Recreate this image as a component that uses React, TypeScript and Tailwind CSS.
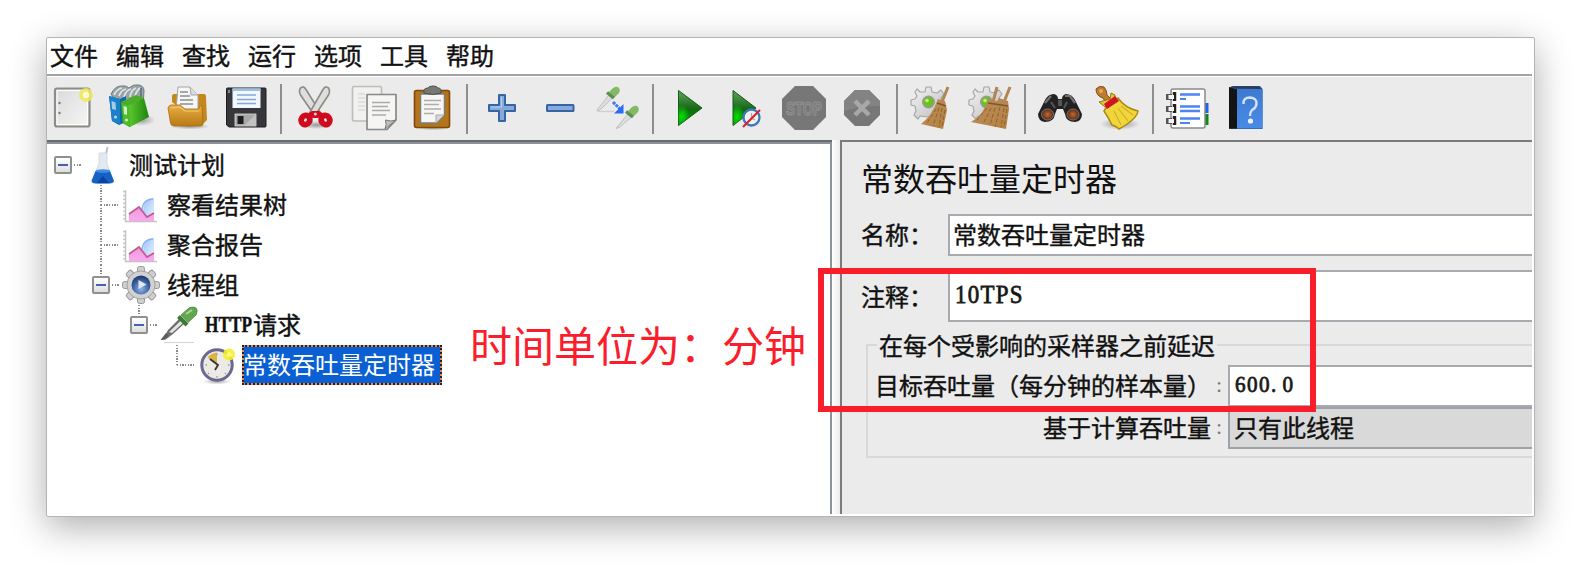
import type { ReactNode } from 'react';

const MENUS = ['文件', '编辑', '查找', '运行', '选项', '工具', '帮助'];

function Svg({ children, size = 48 }: { children: ReactNode; size?: number }) {
  return (
    <svg width={size} height={size} viewBox={`0 0 ${size} ${size}`} className="block shrink-0 overflow-visible">
      {children}
    </svg>
  );
}

function Gradients() {
  return (
    <svg width="0" height="0" className="absolute">
      <defs>
        <linearGradient id="paper" x1="0" y1="0" x2="1" y2="1">
          <stop offset="0" stopColor="#dadada" />
          <stop offset="1" stopColor="#f6f6f6" />
        </linearGradient>
        <linearGradient id="folder" x1="0" y1="0" x2="0" y2="1">
          <stop offset="0" stopColor="#e9ae44" />
          <stop offset="1" stopColor="#b87a14" />
        </linearGradient>
        <linearGradient id="play" x1="0" y1="0" x2="0" y2="1">
          <stop offset="0" stopColor="#5fa75f" />
          <stop offset=".48" stopColor="#1d6b1d" />
          <stop offset=".55" stopColor="#0c6d0c" />
          <stop offset="1" stopColor="#0a9a0a" />
        </linearGradient>
        <radialGradient id="glow" cx=".15" cy=".75" r=".35">
          <stop offset="0" stopColor="#06e006" />
          <stop offset="1" stopColor="#06e006" stopOpacity="0" />
        </radialGradient>
        <linearGradient id="straw" x1="0" y1="0" x2="1" y2="1">
          <stop offset="0" stopColor="#b98e5c" />
          <stop offset="1" stopColor="#b5813f" />
        </linearGradient>
        <linearGradient id="blue" x1="0" y1="0" x2="0" y2="1">
          <stop offset="0" stopColor="#3d7ad0" />
          <stop offset="1" stopColor="#4a8be8" />
        </linearGradient>
        <linearGradient id="green" x1="0" y1="0" x2="1" y2="0">
          <stop offset="0" stopColor="#5cc82c" />
          <stop offset="1" stopColor="#1d8410" />
        </linearGradient>
        <radialGradient id="lens">
          <stop offset="0" stopColor="#c06a38" />
          <stop offset="1" stopColor="#5c2a10" />
        </radialGradient>
        <radialGradient id="ball" cx=".5" cy=".7" r=".7">
          <stop offset="0" stopColor="#8fb5e6" />
          <stop offset=".6" stopColor="#3d62a0" />
          <stop offset="1" stopColor="#1c3564" />
        </radialGradient>
        <radialGradient id="shade">
          <stop offset="0" stopColor="#000" stopOpacity=".35" />
          <stop offset="1" stopColor="#000" stopOpacity="0" />
        </radialGradient>
        <linearGradient id="steel" x1="0" y1="0" x2="1" y2="1">
          <stop offset="0" stopColor="#f4f4f4" />
          <stop offset="1" stopColor="#bdbdbd" />
        </linearGradient>
        <linearGradient id="sky" x1="0" y1="0" x2="1" y2="1">
          <stop offset="0" stopColor="#9cc4fb" />
          <stop offset="1" stopColor="#eaf3ff" />
        </linearGradient>
        <linearGradient id="pink" x1="0" y1="0" x2="0" y2="1">
          <stop offset="0" stopColor="#e8a0d0" />
          <stop offset="1" stopColor="#ffa6f8" />
        </linearGradient>
      </defs>
    </svg>
  );
}

const NewIcon = () => (
  <Svg>
    <rect x="7" y="4.500" width="34.500" height="38" rx="2" fill="url(#paper)" stroke="#8b8d86" strokeWidth="2.200" />
    <rect x="9" y="6.500" width="30.500" height="34" fill="none" stroke="#fff" strokeWidth="1" />
    <circle cx="11.500" cy="19" r="1.200" fill="#777" />
    <circle cx="11.500" cy="29" r="1.200" fill="#777" />
    <circle cx="38" cy="11" r="7" fill="#f1e65a" opacity=".85" />
    <circle cx="38" cy="11" r="3.200" fill="#fffbd0" />
  </Svg>
);

const TemplatesIcon = () => (
  <Svg>
    <ellipse cx="35" cy="36" rx="14" ry="6" fill="url(#shade)" />
    <path d="M5 10 Q9 2 15 2 Q20 1 23 4 Q27 0 33 1 Q38 2 38 7 L37 22 L14 24 Z" fill="#9aa4a7" stroke="#6d7c81" />
    <path d="M8 11 Q11 5 16 4 M13 12 Q15 6 20 5 M18 13 Q20 6 25 5 M24 13 Q25 6 30 4 M29 12 Q31 6 34 4" stroke="#e0e5e6" strokeWidth="1.700" fill="none" />
    <path d="M35 4 L35 18" stroke="#687c83" strokeWidth="2" />
    <path d="M3 12 L14 15 L20 12 L20 38 L13 41 L6 37 Z" fill="#1267ac" />
    <path d="M3 12 L14 15 L14 40 L6 37 Z" fill="#1b80c8" />
    <path d="M5.500 17 L9.500 18.500 L10 26 L6 25 Z" fill="#9fcdea" />
    <circle cx="9.500" cy="33" r="1.500" fill="#b9dcf0" />
    <path d="M15 18 L24 21 L24 43 L17 39 Z" fill="#4bbd2a" stroke="#2b9b19" strokeWidth=".6" />
    <path d="M23 21 L38 14 L43 33 L24 43 Z" fill="url(#green)" />
    <path d="M15 18 L30 11 L38 14 L24 21 Z" fill="#4dad28" />
    <path d="M17.500 22 L21 23 L21 31 L18 30 Z" fill="#d0f0c4" />
    <circle cx="20.500" cy="36" r="1.500" fill="#d0f0c4" />
  </Svg>
);

const OpenIcon = () => (
  <Svg>
    <ellipse cx="26" cy="42.500" rx="20" ry="3" fill="url(#shade)" />
    <path d="M8 18 V12 Q8 10 10 10 H40 Q42 10 42 13 L43 36 L38 41 Z" fill="#c4871d" />
    <path d="M14 3 H26 L34 11 V26 H12 Z" fill="#f6f6f6" stroke="#a4a4a4" />
    <path d="M26 3 L27 11 H34" fill="#ddd" stroke="#a4a4a4" />
    <path d="M16 8 H24 M16 12 H26 M16 16 H29 M16 20 H29" stroke="#8d8d8d" strokeWidth="1.300" />
    <path d="M4 24 Q5 21 7 21 L16 21 L21 25 H34 Q36 24 36 22 Q36 21 38 22 L39 40 Q39 42 36 42 H10 Q7 42 6.500 39 Z" fill="url(#folder)" stroke="#a66f12" strokeWidth=".8" />
    <path d="M7 24 L16 23 L21 27 H35" fill="none" stroke="#f4c873" strokeWidth="1.200" />
  </Svg>
);

const SaveIcon = () => (
  <Svg>
    <path d="M4.500 5 Q4.500 4 5.500 4 H43 Q44 4 44 5 V42 Q44 43 43 43 H7 L4.500 41 Z" fill="#37373b" stroke="#1e1e20" />
    <rect x="10.500" y="4.500" width="28" height="19.500" fill="#f2f7fc" />
    <rect x="10.500" y="4.500" width="28" height="2.500" fill="#9ec1df" />
    <path d="M15 11 H34 M15 15.500 H34 M15 19.500 H34" stroke="#86a9d4" strokeWidth="1.400" />
    <rect x="13" y="30" width="21" height="12" fill="#a8a8a8" stroke="#ddd" strokeWidth=".8" />
    <rect x="15.500" y="32" width="6" height="8" fill="#1d1d1f" />
    <path d="M22 42 L34 30 V42 Z" fill="#c2c2c2" />
    <rect x="6" y="6" width="2" height="3" fill="#888" />
  </Svg>
);

const CutIcon = () => (
  <Svg>
    <ellipse cx="25" cy="41" rx="17" ry="4" fill="url(#shade)" />
    <path d="M8.500 4 Q12 1.500 14 5.500 L28 28 L23 32 L8.500 11 Q6.500 7 8.500 4 Z" fill="#dededc" stroke="#8a8c85" strokeWidth="1.600" />
    <path d="M36.500 4 Q33 1.500 31 5.500 L18 28 L22.500 32 L36.500 11 Q38.500 7 36.500 4 Z" fill="#dededc" stroke="#8a8c85" strokeWidth="1.600" />
    <ellipse cx="13.500" cy="36" rx="4.200" ry="4.600" transform="rotate(35 13.500 36)" fill="none" stroke="#cf0a1f" strokeWidth="5.800" />
    <ellipse cx="33.500" cy="36" rx="4.200" ry="4.600" transform="rotate(-35 33.500 36)" fill="none" stroke="#cf0a1f" strokeWidth="5.800" />
    <path d="M15 30 L20 27 H27 L32 30 L26 34 H21 Z" fill="#cf0a1f" />
    <circle cx="23.300" cy="30" r="1.500" fill="#f7c6ca" />
  </Svg>
);

const CopyIcon = () => (
  <Svg>
    <rect x="2.500" y="2.500" width="29" height="34.500" rx="1.500" fill="#f1f1f0" stroke="#bcbdb9" strokeWidth="1.600" />
    <path d="M8 10 H15 M8 14 H15 M8 18 H15 M8 22 H15 M8 26 H15" stroke="#cfcfcf" strokeWidth="1.200" />
    <path d="M17 10.500 H46 V36 L37 45.500 H17 Z" fill="#f5f5f4" stroke="#888a85" strokeWidth="1.700" strokeLinejoin="round" />
    <path d="M22 18.500 H40 M22 22.500 H38 M22 26.500 H40 M22 31 H36" stroke="#aaa" strokeWidth="1.400" />
    <path d="M35 45 Q37 41 35.500 36 Q41 38 46 36 Z" fill="#bfc0bc" stroke="#777973" />
  </Svg>
);

const PasteIcon = () => (
  <Svg>
    <ellipse cx="25" cy="43.500" rx="17" ry="3" fill="url(#shade)" />
    <rect x="6.500" y="6.500" width="35" height="37" rx="2" fill="#b6741a" stroke="#80480a" strokeWidth="1.600" />
    <path d="M12.500 10 H36.500 V31 L29 39 H12.500 Z" fill="#f6f6f5" stroke="#7b7d78" strokeWidth="1.500" />
    <path d="M16 16.500 H33 M16 20.500 H31 M16 25 H33 M16 29.500 H26" stroke="#adadad" strokeWidth="1.400" />
    <path d="M28 39 V31 H36 Z" fill="#d7d7d5" stroke="#a9aaa6" />
    <path d="M16 9 Q15 4 20 4 Q21 2 25 2 Q29 2 30 4 Q34 4 33 9 Q25 12 16 9 Z" fill="#777972" stroke="#4e504b" />
  </Svg>
);

const PlusIcon = () => (
  <Svg>
    <path d="M21 11 H27 V21 H37 V27 H27 V37 H21 V27 H11 V21 H21 Z" fill="#86abda" stroke="#3665a5" strokeWidth="2" strokeLinejoin="round" />
    <path d="M23.500 13 V23 H13" stroke="#b5cdec" strokeWidth="1.200" fill="none" />
  </Svg>
);

const MinusIcon = () => (
  <Svg>
    <rect x="11" y="21" width="26.500" height="6" rx=".6" fill="#86abda" stroke="#3665a5" strokeWidth="2" />
  </Svg>
);

const ToggleIcon = () => (
  <Svg>
    <path d="M4 27.500 H20" stroke="#cfcfcf" strokeWidth="1.400" />
    <path d="M3 26 L14.500 11.500 L18 14.500 L7 25 L3.500 27 Z" fill="#dedede" stroke="#b5b5b5" strokeWidth=".8" />
    <path d="M15 8 L21 13 L25 9 Q27 5 24 3 Q21 2 18.500 4.500 Z" fill="#84b966" />
    <path d="M13 8.500 L20 14" stroke="#5b8f4c" strokeWidth="3.400" />
    <path d="M22 44.500 L33.500 30.500 L37 33.500 L26 43 Z" fill="#dedede" stroke="#b5b5b5" strokeWidth=".8" />
    <path d="M34 27 L40 32 L44 28 Q46 24 43 22 Q40 21 37.500 23.500 Z" fill="#84b966" />
    <path d="M32 27.500 L39 33" stroke="#5b8f4c" strokeWidth="3.400" />
    <path d="M19 18 L26 25" stroke="#3a7af5" strokeWidth="3" strokeDasharray="3 .8" />
    <path d="M29.500 20 V29.500 H20 Z" fill="#2a6df2" />
  </Svg>
);

const PlayIcon = () => (
  <Svg>
    <path d="M14.500 6.500 L38 24 L14.500 41.500 Z" fill="url(#play)" stroke="#145c14" strokeLinejoin="round" />
    <path d="M14.500 7 L37 24 L14.500 41 Z" fill="url(#glow)" />
  </Svg>
);

const PlayNoTimersIcon = () => (
  <Svg>
    <path d="M11 6.500 L34 24 L11 41.500 Z" fill="url(#play)" stroke="#145c14" strokeLinejoin="round" />
    <path d="M11.500 7 L34 24 L11.500 41 Z" fill="url(#glow)" />
    <circle cx="29.500" cy="33.500" r="8" fill="#f0f0f0" stroke="#3f76bd" strokeWidth="2.300" />
    <path d="M29.500 29 V34 L33 36" stroke="#aaa" strokeWidth="1.300" fill="none" />
    <path d="M21 43 L38 26" stroke="#d6232d" strokeWidth="2.200" />
  </Svg>
);

const StopIcon = () => (
  <Svg>
    <path d="M15 2 H33 L46 15 V33 L33 46 H15 L2 33 V15 Z" fill="#777" />
    <text x="24" y="30.500" textAnchor="middle" textLength="36" lengthAdjust="spacingAndGlyphs" fill="none" stroke="#919191" strokeWidth="1.200" className="font-['Liberation_Sans'] text-[19px] font-bold">
      STOP
    </text>
  </Svg>
);

const ShutdownIcon = () => (
  <Svg>
    <path d="M17 6 H31 L42 17 V31 L31 42 H17 L6 31 V17 Z" fill="#777" />
    <path d="M17 6 H31 L42 17 V22 Q25 22 6 27 V17 Z" fill="#838383" />
    <path d="M17 17 L31 31 M31 17 L17 31" stroke="#a8a8a8" strokeWidth="4.500" />
  </Svg>
);

function GearBody() {
  return (
    <>
      <path d="M12 8 L17 8 L18 3 H23 L24 8 L29 9 L33 6 L36 10 L33 14 L35 20 L35 29 L28 34 L12 32 L10 35 L6 31 L8 27 L7 22 L3 21 V16 L7 15 L9 12 L7 8 L9 5 Z" fill="url(#steel)" stroke="#a6a6a6" strokeWidth="1.200" strokeLinejoin="round" />
      <circle cx="20.500" cy="18" r="6.500" fill="#9a9a9a" />
      <circle cx="20.500" cy="18" r="5" fill="#6cc21d" />
      <circle cx="19" cy="16.500" r="1.800" fill="#c3ee8f" />
    </>
  );
}

const ClearIcon = () => (
  <Svg>
    <GearBody />
    <path d="M40 3 L34 18" stroke="#b08554" strokeWidth="3" />
    <path d="M30 15 L37 17 L39 26 L35 45 L13 40 Q24 32 30 15 Z" fill="url(#straw)" />
    <path d="M28 25 L19 39 M31 24 L25 42 M34 24 L31 43 M37 26 L34 43" stroke="#7c5425" strokeWidth="1" opacity=".7" strokeDasharray="4 2" />
    <path d="M29 19 L38 22" stroke="#7d5530" strokeWidth="1.500" />
  </Svg>
);

const ClearAllIcon = () => (
  <Svg>
    <GearBody />
    <path d="M31 3 L27 18 M44 3 L38 18" stroke="#b08554" strokeWidth="3" />
    <path d="M22 15 L31 17 L33 14 L42 17 L43 25 L40 45 L5 38 Q18 31 22 15 Z" fill="url(#straw)" />
    <path d="M21 24 L10 37 M25 24 L17 40 M29 24 L24 41 M34 23 L29 43 M38 24 L35 43 M41 25 L38 43" stroke="#7c5425" strokeWidth="1" opacity=".7" strokeDasharray="4 2" />
    <path d="M22 19 L42 22" stroke="#7d5530" strokeWidth="1.500" />
  </Svg>
);

const SearchIcon = () => (
  <Svg>
    <path d="M2 30 L9 16 Q12 10 18 10 Q22 11 22 15 H26 Q26 11 30 10 Q36 10 39 16 L46 30 Q46 37 39 38 Q30 38 29 30 L27 25 H21 L19 30 Q18 38 9 38 Q2 37 2 30 Z" fill="#222" />
    <path d="M9 19 L15 12 M29 12 L34 12 L39 19" stroke="#737373" strokeWidth="2.200" fill="none" />
    <path d="M15 18 L19 24 M31 18 L28 24" stroke="#555" strokeWidth="2" />
    <ellipse cx="11.500" cy="30.500" rx="6" ry="5.500" fill="url(#lens)" stroke="#888" strokeWidth=".8" />
    <ellipse cx="37" cy="30.500" rx="6" ry="5.500" fill="url(#lens)" stroke="#888" strokeWidth=".8" />
    <rect x="22" y="16" width="4" height="6" fill="#555" />
  </Svg>
);

const BroomIcon = () => (
  <Svg>
    <ellipse cx="26" cy="40" rx="20" ry="6" fill="url(#shade)" />
    <path d="M2 5 Q5 1 10 3 Q13 6 13 11 L18 16 L12 19 L9 14 Q2 12 2 5 Z" fill="#bd7c2d" stroke="#7e4f16" strokeWidth="1" />
    <circle cx="7" cy="7" r="2" fill="#e2aa60" />
    <path d="M5 18 L16 15 L17 9 L21 11 L21 16 L11 23 Z" fill="#e4c532" stroke="#91760d" />
    <path d="M13 22 L24 14 Q31 24 44 27 Q43 35 25 45 Q22 42 18 41 Q14 33 10 27 Z" fill="#f0d53b" stroke="#a88b10" strokeWidth="1.500" />
    <path d="M20 27 L27 41 M24 24 L34 37 M27 22 L39 31" stroke="#d2b02a" strokeWidth="1.200" />
    <path d="M10 20 L21 12 L25 17 L13 25 Z" fill="#cf1427" />
  </Svg>
);

const FunctionIcon = () => (
  <Svg>
    <rect x="36" y="19" width="8.500" height="10" fill="#1d62f0" />
    <rect x="36" y="30" width="8.500" height="11" fill="#0c8a12" />
    <rect x="7" y="5" width="34" height="39" rx="2" fill="#fff" stroke="#8b8b8b" strokeWidth="1.500" />
    <path d="M16 10.500 H36 M16 22.500 H36 M16 27 H36 M16 34.500 H36" stroke="#4c84f2" strokeWidth="2.300" />
    <path d="M16 15 H22 M16 39 H26" stroke="#4c84f2" strokeWidth="2" />
    <path d="M10.500 8 V17 M10.500 20 V29 M10.500 32 V41" stroke="#222" strokeWidth="3.500" />
    <path d="M2 13 H8 M2 25 H8 M2 37 H8" stroke="#555" strokeWidth="6" />
    <path d="M4.500 13 H10 M4.500 25 H10 M4.500 37 H10" stroke="#f5f5f5" strokeWidth="4" />
  </Svg>
);

const HelpIcon = () => (
  <Svg>
    <path d="M7 4 L10 2 H38 L40.500 5 V45 H7 Z" fill="#25518f" />
    <path d="M10 4 L13 2.500 H36 L39 5 Z" fill="#2c3c50" />
    <rect x="15" y="5" width="25.500" height="39.500" fill="url(#blue)" />
    <path d="M7 3 L13 5 H15 V44.500 H7 Z" fill="#141414" />
    <path d="M21.500 20 Q21 13.500 28 13.500 Q35 14 34.500 20 Q34 24 30 26 Q28 28 28 32" fill="none" stroke="#d5e3ff" strokeWidth="2.400" />
    <circle cx="28.500" cy="37" r="2.600" fill="#eef4ff" />
  </Svg>
);

const GROUPS = [
  [NewIcon, TemplatesIcon, OpenIcon, SaveIcon],
  [CutIcon, CopyIcon, PasteIcon],
  [PlusIcon, MinusIcon, ToggleIcon],
  [PlayIcon, PlayNoTimersIcon, StopIcon, ShutdownIcon],
  [ClearIcon, ClearAllIcon],
  [SearchIcon, BroomIcon],
  [FunctionIcon, HelpIcon],
];

function Toolbar() {
  return (
    <div className="flex h-[63px] items-start bg-[#ebebeb] pl-px pt-[7px]">
      {GROUPS.map((group, i) => (
        <div key={i} className="flex">
          {i > 0 && (
            <div className="flex w-[22px] justify-center">
              <div className="h-[50px] w-0.5 bg-[#8e8e8e]" />
            </div>
          )}
          <div className="flex gap-2.5">
            {group.map((Icon, j) => (
              <Icon key={j} />
            ))}
          </div>
        </div>
      ))}
    </div>
  );
}

const FlaskIcon = () => (
  <Svg size={40}>
    <ellipse cx="20" cy="37" rx="14" ry="2.500" fill="url(#shade)" />
    <path d="M24.500 2 L22 14" stroke="#b9bfc9" strokeWidth="2" />
    <path d="M16 8 H24 V19 L30 35 Q30 38 27 38 H13 Q9 38 9 35 L16 19 Z" fill="#e3e9f0" stroke="#cdd3db" strokeWidth=".8" />
    <path d="M12.500 26 H27 L31 36 Q30 38.500 26 38.500 H13 Q9 38.500 8.500 36 Z" fill="#1562c4" />
    <ellipse cx="20" cy="26" rx="7.300" ry="1.800" fill="#3f8ce4" />
    <path d="M14 38 L20 31 L26 38 Z" fill="#0a43a0" />
  </Svg>
);

const ChartIcon = () => (
  <Svg size={40}>
    <path d="M33 13 V36 H24 Q20 26 24 18 Q27 13 33 13 Z" fill="url(#sky)" />
    <path d="M21 25 Q22 14 32 14" fill="none" stroke="#86b4f8" strokeWidth="1.500" />
    <path d="M8 29 L18 22 L26 32 L33 28 V36 H8 Z" fill="url(#pink)" />
    <path d="M8 29 L18 22 L26 32 L33 28" fill="none" stroke="#c65a90" strokeWidth="1.800" />
    <path d="M4.500 5 V36.500 H36" fill="none" stroke="#c6c2c2" strokeWidth="1.500" />
    <path d="M3 6 V35" fill="none" stroke="#c6c2c2" strokeWidth="2" strokeDasharray="1.300 2.600" />
  </Svg>
);

const ThreadGroupIcon = () => (
  <Svg size={40}>
    {[0, 45, 90, 135, 180, 225, 270, 315].map((angle) => (
      <rect key={angle} x="17.500" y="1.500" width="7" height="10" rx="2" fill="#cfcfcf" stroke="#999" strokeWidth="1" transform={`rotate(${angle} 21 20)`} />
    ))}
    <circle cx="21" cy="20" r="14" fill="#d2d2d2" stroke="#a4a4a4" />
    <circle cx="21" cy="20" r="9.500" fill="url(#ball)" />
    <path d="M18.500 15 L26.500 19.500 L18.500 24 Z" fill="#dfe8f4" />
  </Svg>
);

const SamplerIcon = () => (
  <Svg size={40}>
    <path d="M4 37.500 H34" stroke="#d6d6d6" strokeWidth="1.200" />
    <path d="M3 34 L8 25 L20 13 L25 18 L13 29 L5 35 Z" fill="#6e6e6e" />
    <path d="M9 27 L21 15.500 L23 18 L12 28 Z" fill="#e3e3e3" />
    <path d="M.5 35 L6 28 L9 31 L3 35 Z" fill="#5c5c5c" />
    <path d="M18.500 11.500 L27 20" stroke="#3a7a35" strokeWidth="4" />
    <path d="M21 10 L29 3 Q34 1 36.500 3.500 Q38 6 36 10 L28 17.500 Z" fill="#64a650" stroke="#468a3b" strokeWidth=".8" />
    <path d="M26 9 L32 5" stroke="#a8d696" strokeWidth="2" />
  </Svg>
);

const TimerIcon = () => (
  <Svg size={40}>
    <ellipse cx="19" cy="36.500" rx="14" ry="3" fill="url(#shade)" />
    <circle cx="19" cy="20" r="15.200" fill="#eceae4" stroke="#6c6790" strokeWidth="3" />
    <path d="M19 20 L9.500 12.500 Q13 8 19 7.500 Z" fill="#d9b545" />
    <path d="M12 14 L20 20 L17 25" fill="none" stroke="#333" strokeWidth="1.800" />
    <path d="M19 8.500 V10 M19 31 V32.500 M7.500 20 H9 M30 20 H31.500 M27 28 L28 29 M10 28 L11 29" stroke="#999" strokeWidth="1.300" />
    <circle cx="31" cy="9.500" r="6" fill="#f5ee2a" opacity=".9" />
    <circle cx="31" cy="9.500" r="2.500" fill="#fffa7c" />
  </Svg>
);

function Guide({ above, below, box }: { above?: boolean; below?: boolean; box?: boolean }) {
  const dotsV = 'w-0.5 bg-[repeating-linear-gradient(180deg,#8a8a8a_0_1.35px,transparent_1.35px_2.67px)]';
  return (
    <div className="flex h-10 w-[38px] items-center">
      <div className="flex h-10 w-[38px] flex-col items-center">
        <div className={`flex-1 ${above ? dotsV : ''}`} />
        {box && (
          <div className="flex size-[18px] shrink-0 items-center justify-center rounded-[2px] border-2 border-[#909090] bg-linear-to-b from-white to-[#dedede]">
            <div className="h-[2px] w-2.5 bg-[#4a5fae]" />
          </div>
        )}
        <div className={`flex-1 ${below ? dotsV : ''}`} />
      </div>
      <div className={`-ml-[19px] flex w-[19px] ${box ? 'pl-[11px]' : ''}`}>
        <div className="h-0.5 flex-1 bg-[repeating-linear-gradient(90deg,#8a8a8a_0_1.35px,transparent_1.35px_2.67px)]" />
      </div>
    </div>
  );
}

const NODES = [
  { pad: 'pl-0', Icon: FlaskIcon, icon: 'pl-px', label: '测试计划', box: true },
  { pad: 'pl-[38px]', Icon: ChartIcon, icon: 'pl-[1px]', label: '察看结果树', above: true, below: true },
  { pad: 'pl-[38px]', Icon: ChartIcon, icon: 'pl-[1px]', label: '聚合报告', above: true, below: true },
  { pad: 'pl-[38px]', Icon: ThreadGroupIcon, icon: 'pl-0', label: '线程组', above: true, box: true },
  { pad: 'pl-[76px]', Icon: SamplerIcon, icon: 'pl-[2px]', latin: 'HTTP', label: '请求', above: true, box: true },
  { pad: 'pl-[114px]', Icon: TimerIcon, icon: 'pl-[2px]', label: '常数吞吐量定时器', above: true, selected: true },
];

function Tree() {
  return (
    <div className="flex w-[785px] shrink-0 flex-col border-r-2 border-t-2 border-[#8b929b] bg-white pt-px">
      <div className="-ml-[3px]">
        {NODES.map((n) => (
          <div key={n.label} className={`flex h-10 items-center ${n.pad}`}>
            <Guide above={n.above} below={n.below} box={n.box} />
            <div className={`w-[46px] ${n.icon}`}>
              <n.Icon />
            </div>
            {n.selected ? (
              <div className="h-10 border-2 border-dotted border-[#1b2338] bg-[#f0884c]">
                <div className="flex h-9 w-[196px] items-center bg-[#0a5fd2] pb-[3px] text-[24px] text-white">
                  <span className="-ml-px whitespace-nowrap">{n.label}</span>
                </div>
              </div>
            ) : (
              <div className="flex items-center pb-[3px] pl-[1px] text-[24px] [-webkit-text-stroke:0.4px_#111]">
                {n.latin && (
                  <span className="flex w-12">
                    <span className="origin-left scale-x-[.72] pt-px font-['Liberation_Serif',serif] text-[24px] font-bold leading-8">{n.latin}</span>
                  </span>
                )}
                <span>{n.label}</span>
              </div>
            )}
          </div>
        ))}
      </div>
    </div>
  );
}

function Editor() {
  return (
    <div className="flex flex-1 flex-col border-l-2 border-t-2 border-[#7b7b7b] bg-[#ebebeb]">
      <div className="flex h-[72px] items-center pb-[3px] pl-[19px] text-[32px]">常数吞吐量定时器</div>
      <div className="flex h-[42px] items-center pl-[19px] text-[24px] [-webkit-text-stroke:0.4px_#111]">
        <div className="w-[87px] whitespace-nowrap pb-[3px]">名称：</div>
        <div className="flex h-[42px] flex-1 items-center border-2 border-r-0 border-[#a9aab0] bg-white pb-[3px] pl-[3px]">常数吞吐量定时器</div>
      </div>
      <div className="mt-3.5 flex h-[52px] items-center pl-[19px] text-[24px] [-webkit-text-stroke:0.4px_#111]">
        <div className="w-[87px] whitespace-nowrap pb-px">注释：</div>
        <div className="flex h-[52px] flex-1 items-center border-2 border-r-0 border-[#a9aab0] bg-white pb-[3px] pl-[5px]">
          <span className="origin-left scale-x-[.88] font-['Liberation_Serif',serif] text-[26px] tracking-[1.500px] [-webkit-text-stroke:0.8px_#222]">10TPS</span>
        </div>
      </div>
      <fieldset className="ml-6 mt-[8px] flex h-[128px] flex-col border-2 border-r-0 border-[#d8d8d8] text-[24px] [-webkit-text-stroke:0.4px_#111]">
        <legend className="ml-[9px] h-[30px] px-[2px] leading-[30px]">在每个受影响的采样器之前延迟</legend>
        <div className="mt-[5px] flex h-[42px] items-center">
          <div className="flex w-[360px] items-center justify-end whitespace-nowrap pb-[3px]">
            目标吞吐量（每分钟的样本量）
            <span className="w-[17px] pl-[5px] font-['Liberation_Serif',serif] text-[22px] text-[#777] [-webkit-text-stroke:0]">:</span>
          </div>
          <div className="flex h-[42px] flex-1 items-center border-2 border-r-0 border-[#a9aab0] bg-white pb-0.5 pl-[5px]">
            <span className="origin-left scale-x-[.92] font-['Liberation_Serif',serif] text-[23px] tracking-[1.500px] [-webkit-text-stroke:0.8px_#222]">600<span className="tracking-[7px]">.</span>0</span>
          </div>
        </div>
        <div className="flex h-[42px] items-center">
          <div className="flex w-[360px] items-center justify-end whitespace-nowrap pb-[3px]">
            基于计算吞吐量
            <span className="w-[17px] pl-[5px] font-['Liberation_Serif',serif] text-[22px] text-[#777] [-webkit-text-stroke:0]">:</span>
          </div>
          <div className="flex h-[42px] flex-1 items-center border-2 border-r-0 border-[#9da1a8] bg-[#d9d9d9] pb-[3px] pl-1">只有此线程</div>
        </div>
      </fieldset>
    </div>
  );
}

export default function App() {
  return (
    <div className="h-[570px] w-[1580px] overflow-hidden bg-white pl-[46px] pt-[37px] font-['Noto_Sans_CJK_SC',sans-serif] text-[#111]">
      <Gradients />
      <div className="relative h-[480px] w-[1489px] rounded-[2px] border border-[#b4b4b4] bg-white shadow-[0_10px_36px_rgba(0,0,0,0.32)]">
        <div className="flex h-[478px] w-[1485px] flex-col overflow-hidden pb-0.5">
          <div className="flex h-9 shrink-0 items-center gap-[18px] pb-[3px] pl-[3px] text-[24px] [-webkit-text-stroke:0.4px_#111]">
            {MENUS.map((m) => (
              <span key={m}>{m}</span>
            ))}
          </div>
          <div className="h-[3px] shrink-0 border-t-2 border-[#a3a3a3] bg-white" />
          <Toolbar />
          <div className="flex min-h-0 flex-1">
            <div className="flex border-t-2 border-[#6a6a6a]">
              <Tree />
            </div>
            <div className="w-2 bg-linear-to-r from-white to-[#ebebeb]" />
            <Editor />
          </div>
        </div>
        <div className="absolute left-[423px] top-[278px] whitespace-nowrap text-[42px] leading-[56px] text-[#fa1e2d]">时间单位为：分钟</div>
        <div className="absolute left-[771px] top-[230px] h-[144px] w-[498px] border-[6px] border-[#fa1e2d]" />
      </div>
    </div>
  );
}
